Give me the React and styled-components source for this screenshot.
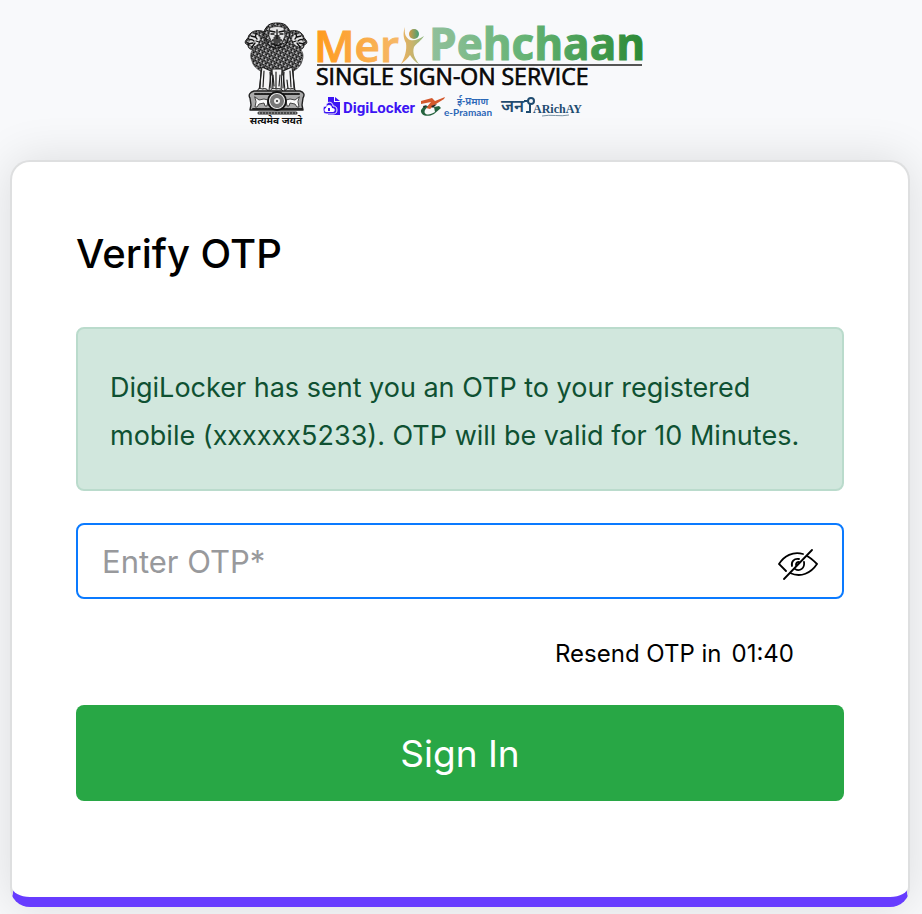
import React, { useState } from "react";
import styled, { createGlobalStyle } from "styled-components";

const GlobalStyle = createGlobalStyle`
  *, *::before, *::after { box-sizing: border-box; }
  body {
    margin: 0;
    background: #f8f9fb;
    color: #000;
    font-family: Inter, "Noto Sans", sans-serif;
    overflow-x: hidden;
  }
`;

const Page = styled.main`
  display: flex;
  flex-direction: column;
  padding: 20px 12px 8px 10px;
`;

const Header = styled.header`
  display: flex;
  justify-content: center;
  height: 140px;
`;

const LogoSvg = styled.svg`
  flex: none;
  display: block;
  margin-right: 30px;
  overflow: visible;
`;

const Card = styled.form`
  display: flex;
  flex-direction: column;
  padding: 60px 64px 96px;
  background: #fff;
  border: 2px solid #dedfe0;
  border-bottom: 10px solid #673cff;
  border-radius: 20px;
  box-shadow: 0 0 48px rgba(0, 0, 0, 0.12);
`;

const Title = styled.h1`
  margin: 0 0 41px;
  font-size: 40px;
  font-weight: 500;
  line-height: 64px;
`;

const Notice = styled.p`
  margin: 0 0 32px;
  padding: 35px 32px 29px;
  font-size: 27px;
  line-height: 48px;
  color: #0f5132;
  background: #d1e7dd;
  border: 2px solid #badbcc;
  border-radius: 8px;
`;

const Field = styled.div`
  display: flex;
  align-items: center;
  height: 76px;
  padding: 0 24px;
  border: 2px solid #0a7aff;
  border-radius: 8px;
`;

const OtpInput = styled.input`
  flex: 1;
  min-width: 0;
  padding: 2px 0 0;
  border: 0;
  outline: 0;
  background: transparent;
  font: 400 31px/44px Inter, sans-serif;
  color: #212529;
  &::placeholder { color: #98999c; opacity: 1; }
`;

const IconButton = styled.button`
  display: flex;
  padding: 8px 0 0;
  border: 0;
  background: transparent;
  color: #000;
  cursor: pointer;
`;

const Resend = styled.div`
  display: flex;
  justify-content: flex-end;
  gap: 10px;
  margin: 38px 50px 35px 0;
  font-size: 24px;
  line-height: 33px;
`;

const SubmitButton = styled.button`
  height: 96px;
  padding: 2px 0 0;
  border: 0;
  border-radius: 8px;
  background: #28a745;
  color: #fff;
  font: 400 37px/56px Inter, sans-serif;
  cursor: pointer;
`;

function SideLion() {
  return (
    <g>
      <path d="M21 10C16 8 10 8 7 11c-3 2-2 4-4 6-3 3-2 5 1 6 0 3 2 5 5 4l5-1 8 4z" fill="url(#mane)" stroke="#222" />
      <path d="M6 14l3-2 5 1 2 4-2 5-5 3-4-3z" fill="#e2e2e3" />
      <path d="M7 14l4 1M5 18c2-1 4 0 5 1M4 22l5-1M8 25l3-4M13 11c-2 2-2 4 0 6M12 19l3 1" fill="none" stroke="#111" strokeWidth="1.3" />
    </g>
  );
}

function Emblem() {
  return (
    <g strokeLinecap="round" strokeLinejoin="round">
      <defs>
        <pattern id="mane" width="4" height="4" patternUnits="userSpaceOnUse" patternTransform="rotate(28)">
          <rect width="4" height="4" fill="#cfcfd1" />
          <path d="M0 1c1-1 3 0 2 2M2 3c1-1 2-1 2 1M3 0l1 1" fill="none" stroke="#0d0d0d" strokeWidth="1.2" />
        </pattern>
      </defs>
      <SideLion />
      <g transform="translate(64 0) scale(-1 1)"><SideLion /></g>
      <path d="M10 26c-4 4-4 9-2 13 1 5 5 8 10 11l8 3h14l8-3c5-3 9-6 10-11 2-5 1-10-3-13l-10-5H21z" fill="url(#mane)" stroke="#333" strokeWidth=".7" />
      <path d="M18 45l-3 24h10l2-20zM28 47l1 22h8l1-22zM39 49l2 20h10l-3-24z" fill="#f4f4f5" stroke="#222" strokeWidth="1.1" />
      <path d="M17 48l-1 18M20 49l-1 16M26 50l1 16M32 50v17M29 53l1 11M36 53l-1 11M40 50l-1 16M43 58l1 9M46 49l1 16M49 48l1 18" fill="none" stroke="#222" strokeWidth="1.2" />
      <path d="M13 69c1-3 4-3 5-2 3-1 6 0 6 2zM26 69c1-3 4-3 6-2 3-1 6 0 7 2zM41 69c1-3 4-3 5-2 3-1 5 0 6 2z" fill="#ddd" stroke="#111" />
      <path d="M22 6c2-4 6-5 11-5s9 1 11 5c3 3 2 8 0 11-1 6-5 9-11 9s-10-3-11-9c-3-3-3-8 0-11z" fill="url(#mane)" stroke="#111" />
      <path d="M26 6c4-2 10-2 14 0l1 8-3 7H28l-3-7z" fill="#e5e5e6" stroke="#333" strokeWidth=".8" />
      <path d="M26 9l5 1M35 10l5-1M27 12h3M36 12h3M33 8v7M30 16h6M28 19c3-2 7-2 10 0M29 22c3 2 6 2 8 0M31 14h4" fill="none" stroke="#111" strokeWidth="1.3" />
      <path d="M28 17h10l-2 4h-6z" fill="#444" />
      <path d="M10 69h46c4 1 5 4 3 7l-1 7 1 5H6l1-5-1-7c-2-3 0-6 4-7z" fill="#aaa" stroke="#222" strokeWidth="1.4" />
      <path d="M11 72h44M9 87h49" stroke="#222" strokeWidth="2" strokeDasharray="2 1" fill="none" />
      <path d="M11 75l4 3 5-1 4 1-1 6h-2l-1-3-5 1-2 3h-2l1-5zM55 75l-4 3-5-1-4 1 1 6h2l1-3 5 1 2 3h2l-1-5z" fill="#fafafa" stroke="#222" strokeWidth=".8" />
      <circle cx="33" cy="79" r="9" fill="#eee" stroke="#111" strokeWidth="1.8" />
      <circle cx="33" cy="79" r="5" fill="none" stroke="#777" strokeWidth="4" strokeDasharray="1 1" />
      <circle cx="33" cy="79" r="1" fill="#222" />
      <path d="M15 91h37" stroke="#222" strokeWidth="3" />
      <path d="M15 91h37" stroke="#ddd" strokeWidth="1" strokeDasharray="1 2" />
      <text x="32" y="102" textAnchor="middle" fontFamily='"Noto Sans", "Noto Sans Devanagari", sans-serif' fontSize="10" fontWeight="700" fill="#111">सत्यमेव जयते</text>
    </g>
  );
}

function Logo() {
  return (
    <LogoSvg width="402" height="110" viewBox="0 -2 402 110" role="img" aria-label="Meri Pehchaan Single Sign-On Service">
      <defs>
        <linearGradient id="orange"><stop stopColor="#ff991c" /><stop offset="1" stopColor="#f6b968" /></linearGradient>
        <linearGradient id="green"><stop stopColor="#91c09c" /><stop offset=".45" stopColor="#65b374" /><stop offset="1" stopColor="#2b8934" /></linearGradient>
        <linearGradient id="person"><stop stopColor="#efb25e" /><stop offset=".5" stopColor="#c8b36c" /><stop offset="1" stopColor="#8dbb83" /></linearGradient>
        <linearGradient id="head"><stop stopColor="#d69a45" /><stop offset="1" stopColor="#43a076" /></linearGradient>
      </defs>
      <Emblem />
      <g fontFamily='"Open Sans", sans-serif'>
        <text x="70" y="40" fontSize="44" fontWeight="600" fill="url(#orange)" stroke="url(#orange)">Mer</text>
        <text x="185" y="38" fontSize="44" fontWeight="700" fill="url(#green)" stroke="url(#green)">Pehchaan</text>
        <text x="72" y="63" fontSize="23" fontWeight="500" fill="#080808" stroke="#080808" strokeWidth=".7">SINGLE SIGN-ON SERVICE</text>
      </g>
      <circle cx="170" cy="12" r="5" fill="url(#head)" />
      <path d="M161 5c-1 7 1 11 5 13 5 1 9-1 14-4-3 5-7 7-10 11-2 6 1 12 5 17-4-2-7-6-9-9-2 3-5 6-9 9 4-7 6-14 5-21-3-5-3-11-1-16z" fill="url(#person)" />
      <path d="M73 43h325" stroke="#555" strokeWidth="2" />
      <g fill="#3c14f4">
        <path d="M84 75h6v5h6v13H84z" />
        <path d="M91 75l5 4h-5z" />
        <path d="M79 87c0-2 1-3 3-3 0-5 7-5 7 0 2 0 4 1 4 4s-2 4-4 4h-7c-2 0-3-2-3-5z" stroke="#f8f9fb" strokeWidth="1" />
        <path d="M82 86c0-4 6-4 6 0 4 0 3 4 1 4h-7c-2 0-2-4 0-4z" fill="#fff" />
        <path d="M84 86h2v3h-2z" />
        <text x="99" y="91" fontFamily="Roboto, sans-serif" fontSize="15" fontWeight="700">DigiLocker</text>
      </g>
      <g strokeLinejoin="round">
        <path d="M177 79l11-3 3 3 10-4-1 2-8 5-6 5-4-1 5-6-10 2z" fill="#d3582c" />
        <path d="M184 84l-3 4c-2 5 4 6 10 2l-1-5 5-1 2 2-7 6c-7 4-14 1-13-4l3-4z" fill="#25633f" />
        <path d="M179 84l4-1-3 3zM187 84l6-2-4 4z" fill="#272726" />
      </g>
      <g fill="#2c67b7">
        <text x="213" y="83" fontSize="10" fontWeight="600" fontFamily='"Noto Sans", "Noto Sans Devanagari", sans-serif'>ई-प्रमाण</text>
        <text x="200" y="94" fontSize="10" fontFamily="Lato, sans-serif" fontWeight="700">e-Pramaan</text>
      </g>
      <g fill="#1f4c70">
        <text x="257" y="90" fontFamily='"Noto Sans", "Noto Sans Devanagari", sans-serif' fontSize="17" fontWeight="600">जन</text>
        <circle cx="287" cy="79" r="3" fill="none" stroke="#1f4c70" strokeWidth="2" />
        <path d="M280 79h4M286 82v8M282 90h5" fill="none" stroke="#1f4c70" strokeWidth="2" />
        <text x="289" y="91" fontFamily='"Liberation Serif", serif' fontSize="12" fontWeight="700">ARichAY</text>
        <path d="M298 94c9-2 18 1 27-1" fill="none" stroke="#7893a6" />
      </g>
    </LogoSvg>
  );
}

function EyeOff() {
  return (
    <svg width="40" height="32" viewBox="0 0 40 32" fill="none" stroke="currentColor" strokeWidth="1.8" strokeLinecap="round" aria-hidden="true">
      <path d="M25 5C15 2 6 7 1 15l7 7M12 24c11 5 21 0 27-9-3-3-6-6-10-8" />
      <path d="M21 10c-5-1-8 3-7 7M17 20c5 3 10-1 9-7M21 13c-2 0-3 1-3 3" />
      <path d="M34 1L6 30" />
    </svg>
  );
}

export default function App() {
  const [visible, setVisible] = useState(false);
  return (
    <>
      <GlobalStyle />
      <Page>
        <Header><Logo /></Header>
        <Card onSubmit={(event) => event.preventDefault()}>
          <Title>Verify OTP</Title>
          <Notice role="status">
            DigiLocker has sent you an OTP to your registered mobile (xxxxxx5233). OTP will be valid for 10 Minutes.
          </Notice>
          <Field>
            <OtpInput type={visible ? "text" : "password"} placeholder="Enter OTP*" aria-label="Enter OTP" autoComplete="one-time-code" />
            <IconButton type="button" aria-label="Toggle OTP visibility" onClick={() => setVisible(!visible)}>
              <EyeOff />
            </IconButton>
          </Field>
          <Resend><span>Resend OTP in</span><span>01:40</span></Resend>
          <SubmitButton type="submit">Sign In</SubmitButton>
        </Card>
      </Page>
    </>
  );
}
